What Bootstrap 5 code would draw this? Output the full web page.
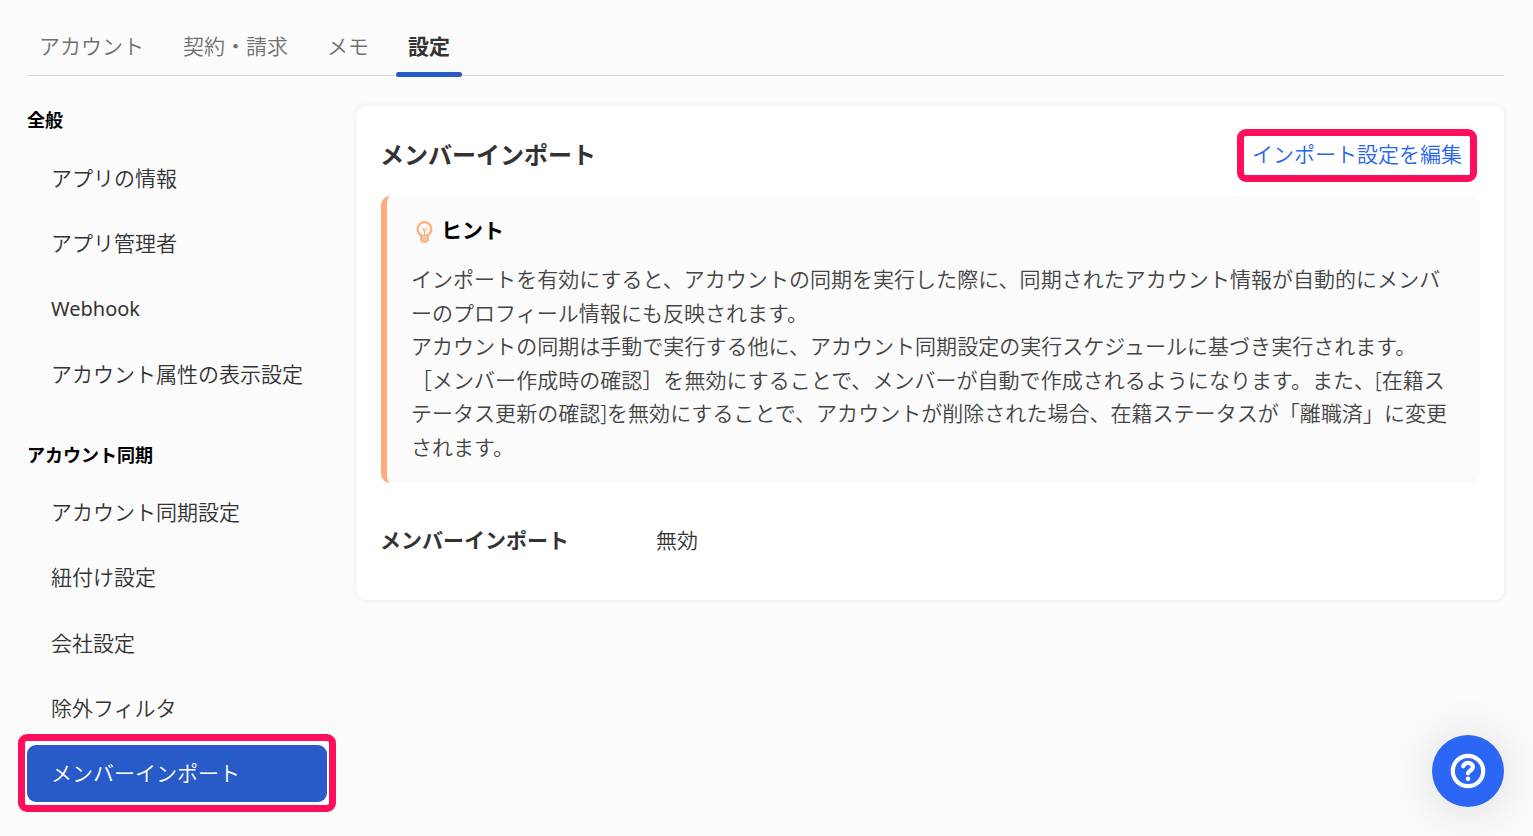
<!DOCTYPE html>
<html lang="ja">
<head>
<meta charset="utf-8">
<meta name="viewport" content="width=device-width, initial-scale=1">
<title>メンバーインポート</title>
<link href="https://cdn.jsdelivr.net/npm/bootstrap@5.3.0/dist/css/bootstrap.min.css" rel="stylesheet">
<style>
body{font-family:"Noto Sans","Noto Sans CJK JP",sans-serif;font-size:21px;font-weight:350;line-height:33.6px;color:#333;background:#fbfbfb;height:836px;overflow:hidden}
.page{padding:27px 29px 0 27px}
.tabs{height:49px;gap:15px;border-bottom:1px solid #ddd}
.tabs .nav-link{position:relative;padding:3px 12px 0;color:#707070;height:48px}
.tabs .nav-link.active{color:#333;font-weight:700}
.tabs .nav-link.active::after{content:"";position:absolute;left:0;right:0;bottom:-2px;height:5px;border-radius:3px;background:#285ac8}
.side{width:300px;padding-top:28px}
.group-title{font-size:18px;line-height:32px;font-weight:700;color:#000;margin:0 0 13.75px}
.group-title.second{margin-top:36.25px;margin-bottom:13.25px}
.menu{gap:8.25px}
.menu .nav-link{height:57px;padding:1px 24px 0;display:flex;align-items:center;color:#333;border-radius:9px}
.menu .nav-link.active{background:#285ac8;color:#fff;position:relative}
.menu .nav-link.active::before{content:"";position:absolute;z-index:-1;left:-9px;right:-9px;top:-11px;bottom:-10px;border:7px solid #ff0f5b;border-radius:9px;background:#fff}
.menu .latin{font-size:20px;font-weight:400;color:#333}
.panel{margin:30px 0 0 30px;padding:23px 24px 0;height:494px;border:0;border-radius:9px;background:#fff;box-shadow:0 0 6px rgba(0,0,0,.07);color:#333}
.panel h1{font-size:24px;line-height:36px;font-weight:700;margin:0 0 2px -1px;color:#333}
.panel-head{height:53px;margin-right:3px}
.edit{border:7px solid #ff0f5b;border-radius:9px;width:240px;height:53px;padding-bottom:1px;color:#2864f0;text-decoration:none}
.tip{margin-top:14px;height:287px;border-left:6px solid #ffac7c;border-radius:9px;background:#fbfbfb;padding:18px 0 0 24px;color:#444}
.tip p{letter-spacing:.03px}
.tip-title{gap:3px;color:#000;font-weight:700;margin-bottom:15.5px}
.tip-title svg{margin-top:4px}
.setting{margin-top:40.5px}
.setting dt{width:275px;text-indent:-1px;color:#333}
.fab{position:fixed;right:29px;bottom:29px;width:72px;height:72px;border:0;border-radius:50%;background:#2c66f4;box-shadow:0 3px 48px rgba(0,0,0,.14)}
</style>
</head>
<body>
<div class="page">
  <nav class="nav tabs flex-nowrap">
    <a class="nav-link" href="#">アカウント</a>
    <a class="nav-link" href="#">契約・請求</a>
    <a class="nav-link" href="#">メモ</a>
    <a class="nav-link active" href="#">設定</a>
  </nav>
  <div class="d-flex align-items-start">
    <aside class="side flex-shrink-0">
      <h2 class="group-title">全般</h2>
      <nav class="nav flex-column menu">
        <a class="nav-link" href="#">アプリの情報</a>
        <a class="nav-link" href="#">アプリ管理者</a>
        <a class="nav-link" href="#"><span class="latin">Webhook</span></a>
        <a class="nav-link" href="#">アカウント属性の表示設定</a>
      </nav>
      <h2 class="group-title second">アカウント同期</h2>
      <nav class="nav flex-column menu">
        <a class="nav-link" href="#">アカウント同期設定</a>
        <a class="nav-link" href="#">紐付け設定</a>
        <a class="nav-link" href="#">会社設定</a>
        <a class="nav-link" href="#">除外フィルタ</a>
        <a class="nav-link active" href="#">メンバーインポート</a>
      </nav>
    </aside>
    <main class="card panel flex-grow-1">
      <div class="panel-head d-flex justify-content-between align-items-center">
        <h1>メンバーインポート</h1>
        <a class="edit d-flex align-items-center justify-content-center" href="#">インポート設定を編集</a>
      </div>
      <section class="tip text-nowrap">
        <div class="tip-title d-flex align-items-center">
          <svg width="27" height="27" viewBox="0 0 27 27" fill="none" stroke="#ffac7c">
            <path d="M10.300 17.500v-1.300a6.900 6.900 0 1 1 6.400 0v1.300" stroke-width="2.200"/>
            <path d="M9.200 16h8.600v5.200q0 1.200-1.300 1.500l-1.200 1h-3.600l-1.200-1Q9.200 22.400 9.200 21.200z" fill="#ffac7c" stroke="none"/>
            <path d="M11 18.300h5M11 20.800h5" stroke="#fff" stroke-width=".8"/>
            <path d="M11 9l2.500 2.600L16 9M13.500 11.600v5" stroke-width="1.200"/>
          </svg>
          <span>ヒント</span>
        </div>
        <p class="mb-0">インポートを有効にすると、アカウントの同期を実行した際に、同期されたアカウント情報が自動的にメンバ<br>ーのプロフィール情報にも反映されます。<br>アカウントの同期は手動で実行する他に、アカウント同期設定の実行スケジュールに基づき実行されます。<br>［メンバー作成時の確認］を無効にすることで、メンバーが自動で作成されるようになります。また、[在籍ス<br>テータス更新の確認]を無効にすることで、アカウントが削除された場合、在籍ステータスが「離職済」に変更<br>されます。</p>
      </section>
      <dl class="setting d-flex mb-0">
        <dt>メンバーインポート</dt>
        <dd class="mb-0">無効</dd>
      </dl>
    </main>
  </div>
</div>
<button class="fab d-flex align-items-center justify-content-center p-0" type="button" aria-label="ヘルプ">
  <svg width="36" height="36" viewBox="0 0 36 36" fill="none" stroke="#fff" stroke-linecap="round" stroke-linejoin="round">
    <circle cx="18" cy="18" r="15.200" stroke-width="4.200"/>
    <path d="M13.200 13.200c1-2.200 2.800-3.300 4.900-3.300 2.800 0 4.700 1.800 4.700 4.200 0 3.700-4.800 3.700-4.800 6.200" stroke-width="4.200"/>
    <circle cx="18" cy="25.800" r="2.300" fill="#fff" stroke="none"/>
  </svg>
</button>
<script src="https://cdn.jsdelivr.net/npm/bootstrap@5.3.0/dist/js/bootstrap.bundle.min.js"></script>
</body>
</html>
